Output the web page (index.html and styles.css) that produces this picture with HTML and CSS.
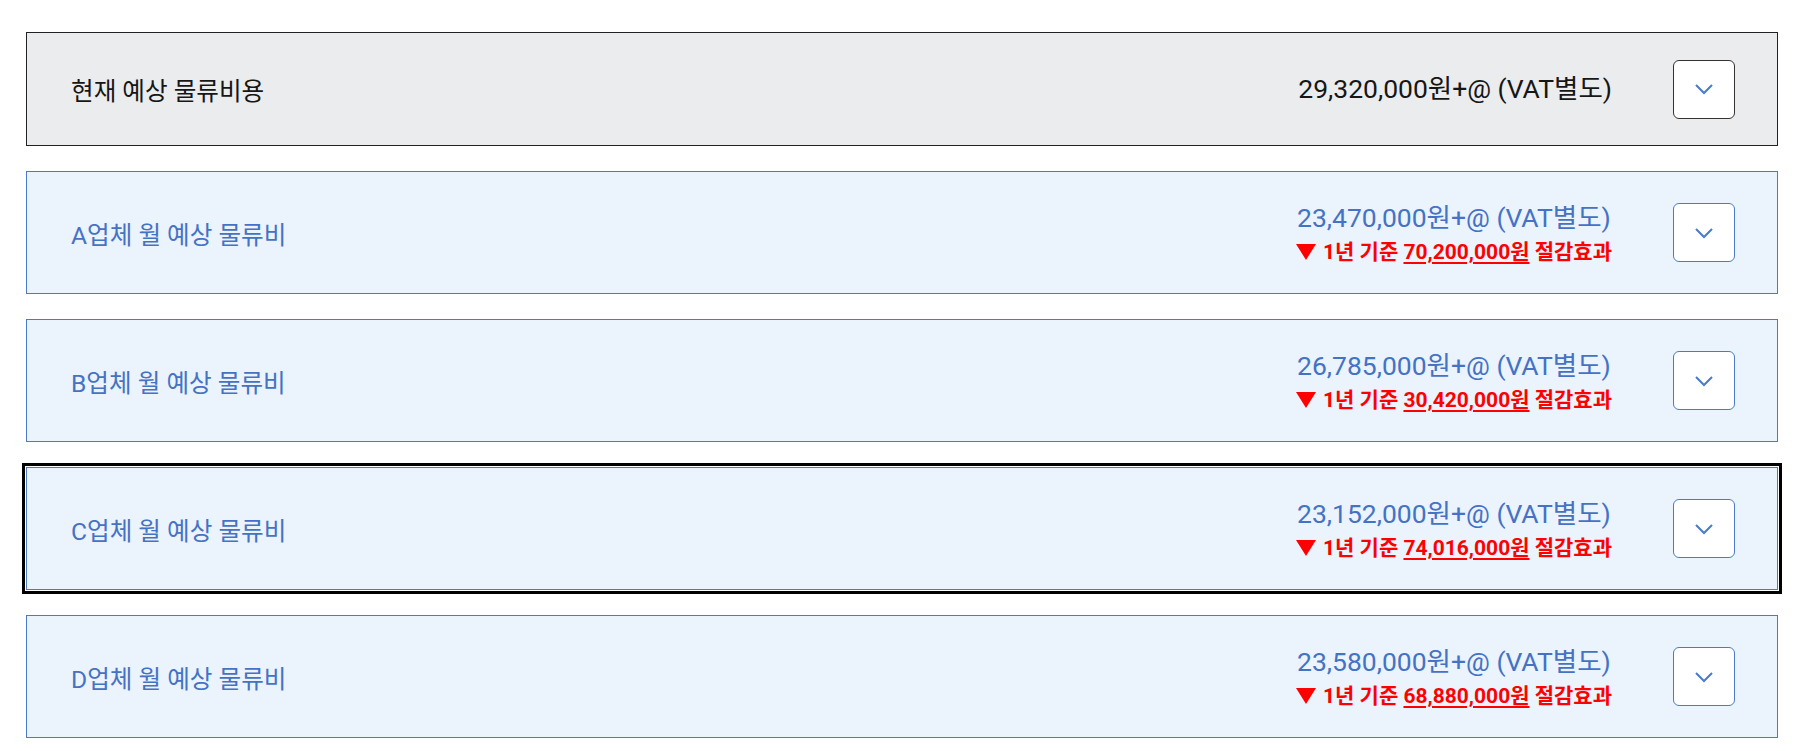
FILE: index.html
```html
<!DOCTYPE html>
<html lang="ko">
<head>
<meta charset="utf-8">
<title>예상 물류비용 비교</title>
<link rel="stylesheet" href="styles.css">
</head>
<body>
<div class="list">
  <div class="row row-current">
    <div class="label">현재 예상 물류비용</div>
    <div class="price">
      <div class="amount">29,320,000원+@ (VAT별도)</div>
    </div>
    <button class="toggle" type="button" aria-label="펼치기">
      <svg width="20" height="12" viewBox="0 0 20 12"><polyline points="2,2 10,10 18,2" fill="none" stroke="#4a7bc8" stroke-width="2"/></svg>
    </button>
  </div>

  <div class="row row-vendor">
    <div class="label">A업체 월 예상 물류비</div>
    <div class="price">
      <div class="amount">23,470,000원+@ (VAT별도)</div>
      <div class="saving"><svg class="tri" width="20" height="16" viewBox="0 0 20 16"><polygon points="0,0 20,0 10,16" fill="#ff0000"/></svg> 1년 기준 <u>70,200,000원</u> 절감효과</div>
    </div>
    <button class="toggle" type="button" aria-label="펼치기">
      <svg width="20" height="12" viewBox="0 0 20 12"><polyline points="2,2 10,10 18,2" fill="none" stroke="#4a7bc8" stroke-width="2"/></svg>
    </button>
  </div>

  <div class="row row-vendor">
    <div class="label">B업체 월 예상 물류비</div>
    <div class="price">
      <div class="amount">26,785,000원+@ (VAT별도)</div>
      <div class="saving"><svg class="tri" width="20" height="16" viewBox="0 0 20 16"><polygon points="0,0 20,0 10,16" fill="#ff0000"/></svg> 1년 기준 <u>30,420,000원</u> 절감효과</div>
    </div>
    <button class="toggle" type="button" aria-label="펼치기">
      <svg width="20" height="12" viewBox="0 0 20 12"><polyline points="2,2 10,10 18,2" fill="none" stroke="#4a7bc8" stroke-width="2"/></svg>
    </button>
  </div>

  <div class="row row-vendor is-focused">
    <div class="label">C업체 월 예상 물류비</div>
    <div class="price">
      <div class="amount">23,152,000원+@ (VAT별도)</div>
      <div class="saving"><svg class="tri" width="20" height="16" viewBox="0 0 20 16"><polygon points="0,0 20,0 10,16" fill="#ff0000"/></svg> 1년 기준 <u>74,016,000원</u> 절감효과</div>
    </div>
    <button class="toggle" type="button" aria-label="펼치기">
      <svg width="20" height="12" viewBox="0 0 20 12"><polyline points="2,2 10,10 18,2" fill="none" stroke="#4a7bc8" stroke-width="2"/></svg>
    </button>
  </div>

  <div class="row row-vendor">
    <div class="label">D업체 월 예상 물류비</div>
    <div class="price">
      <div class="amount">23,580,000원+@ (VAT별도)</div>
      <div class="saving"><svg class="tri" width="20" height="16" viewBox="0 0 20 16"><polygon points="0,0 20,0 10,16" fill="#ff0000"/></svg> 1년 기준 <u>68,880,000원</u> 절감효과</div>
    </div>
    <button class="toggle" type="button" aria-label="펼치기">
      <svg width="20" height="12" viewBox="0 0 20 12"><polyline points="2,2 10,10 18,2" fill="none" stroke="#4a7bc8" stroke-width="2"/></svg>
    </button>
  </div>
</div>
</body>
</html>
```

FILE: styles.css
```css
* {
  box-sizing: border-box;
}

body {
  margin: 0;
  padding: 32px 0 0 26px;
  background: #ffffff;
  font-family: Roboto, "Noto Sans CJK KR", sans-serif;
}

.list {
  width: 1752px;
  display: flex;
  flex-direction: column;
  gap: 25px;
}

.row {
  display: flex;
  align-items: center;
  padding: 0 42px 0 44px;
  border: 1px solid #4a7bc8;
  background: #ebf3fd;
  color: #4472c4;
  height: 123px;
}

.row-current {
  height: 114px;
  border-color: #222222;
  background: #ebecee;
  color: #161616;
}

.is-focused {
  outline: 3px solid #000000;
  outline-offset: 1px;
}

.label {
  flex: 1;
  font-size: 24.6px;
}

.price {
  display: flex;
  flex-direction: column;
  align-items: center;
  margin-right: 61px;
}

.amount {
  font-size: 26.5px;
  line-height: 38px;
  white-space: nowrap;
}

.saving {
  display: flex;
  align-items: center;
  font-size: 21px;
  font-weight: 700;
  line-height: 30px;
  color: #ff0000;
  white-space: pre;
}

.saving u {
  text-decoration-thickness: 2px;
  text-underline-offset: 3px;
}

.tri {
  margin-right: 2px;
}

.toggle {
  width: 62px;
  height: 59px;
  flex: none;
  display: flex;
  align-items: center;
  justify-content: center;
  padding: 0;
  background: #ffffff;
  border: 1px solid #4a7bc8;
  border-radius: 6px;
}

.row-current .toggle {
  border-color: #333333;
}
```
